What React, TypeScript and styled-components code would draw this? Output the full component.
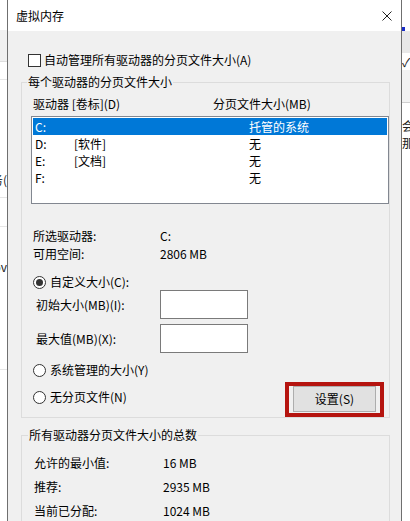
import React from "react";
import styled, { createGlobalStyle } from "styled-components";

const Global = createGlobalStyle`
  html, body { margin: 0; padding: 0; background: #fff; }
  body {
    width: 410px; height: 521px; overflow: hidden;
    font-family: "Noto Sans CJK SC", "Noto Sans", "Liberation Sans", sans-serif;
    font-size: 12px; color: #000;
  }
  * { box-sizing: border-box; }
`;

const Screen = styled.div`
  display: flex;
  width: 410px;
  height: 521px;
  overflow: hidden;
`;

const Strip = styled.div<{ $w: number }>`
  width: ${(p) => p.$w}px;
  flex: none;
  display: flex;
  flex-direction: column;
  overflow: hidden;
  background: #fff;
`;

const Seg = styled.div<{ $h: number; $bg?: string; $line?: string; $end?: boolean }>`
  height: ${(p) => p.$h}px;
  flex: none;
  background: ${(p) => p.$bg || "#fff"};
  border-bottom: ${(p) => (p.$line ? `1px solid ${p.$line}` : "none")};
  display: flex;
  align-items: center;
  justify-content: ${(p) => (p.$end ? "flex-end" : "flex-start")};
  overflow: hidden;
  white-space: nowrap;
  line-height: 16px;
  color: #222;
`;

const Mark = styled.div`
  width: 3px;
  height: 4px;
  background: #1a2ec8;
`;

const Dialog = styled.div`
  width: 395px;
  flex: none;
  display: flex;
  flex-direction: column;
  border-left: 1px solid #6f6f6f;
  border-right: 1px solid #6f6f6f;
  background: #f0f0f0;
`;

const TitleBar = styled.div`
  height: 31px;
  flex: none;
  background: #fff;
  display: flex;
  align-items: center;
  justify-content: space-between;
  padding: 0 8px 0 8px;
  line-height: 16px;
`;

const CloseBtn = styled.div`
  width: 10px;
  height: 10px;
  margin-right: 1px;
  display: flex;
`;

const Body = styled.div`
  flex: 1;
  padding: 21px 11px 0 13px;
  display: flex;
  flex-direction: column;
`;

const CheckRow = styled.label`
  display: flex;
  align-items: center;
  height: 16px;
  margin-left: 7px;
  gap: 3px;
  line-height: 16px;
`;

const CheckBox = styled.span`
  width: 13px;
  height: 13px;
  border: 1px solid #333;
  background: #fff;
  flex: none;
`;

const Group = styled.fieldset<{ $mt: number }>`
  margin: ${(p) => p.$mt}px 0 0 0;
  padding: 0;
  min-width: 0;
  border: 1px solid #dcdcdc;
`;

const Legend = styled.legend<{ $ml: number }>`
  margin-left: ${(p) => p.$ml}px;
  padding: 0 1px;
  line-height: 16px;
  height: 16px;
`;

const GroupInner = styled.div<{ $pl: number }>`
  padding-left: ${(p) => p.$pl}px;
  display: flex;
  flex-direction: column;
`;

const HeaderRow = styled.div`
  display: grid;
  grid-template-columns: 180px 1fr;
  margin: 6px 0 0 2px;
  line-height: 16px;
  height: 16px;
`;

const ListBox = styled.div`
  margin-top: 4px;
  height: 88px;
  border: 1px solid #828790;
  background: #fff;
  padding: 1px;
`;

const ListRow = styled.div<{ $sel?: boolean }>`
  display: grid;
  grid-template-columns: 39px 175px 1fr;
  height: 17px;
  line-height: 17px;
  padding-left: 2px;
  background: ${(p) => (p.$sel ? "#0078d7" : "transparent")};
  color: ${(p) => (p.$sel ? "#fff" : "#000")};
`;

const InfoRow = styled.div<{ $lw: number; $h: number; $ml: number; $mt?: number }>`
  display: grid;
  grid-template-columns: ${(p) => p.$lw}px 1fr;
  height: ${(p) => p.$h}px;
  line-height: ${(p) => p.$h}px;
  margin-left: ${(p) => p.$ml}px;
  margin-top: ${(p) => p.$mt || 0}px;
`;

const RadioRow = styled.label<{ $mt: number }>`
  display: flex;
  align-items: center;
  gap: 4px;
  height: 16px;
  line-height: 16px;
  margin: ${(p) => p.$mt}px 0 0 2px;
`;

const Radio = styled.span<{ $on?: boolean }>`
  width: 13px;
  height: 13px;
  border-radius: 50%;
  border: 1px solid #333;
  background: #fff;
  flex: none;
  display: flex;
  align-items: center;
  justify-content: center;
  &::after {
    content: "";
    width: 7px;
    height: 7px;
    border-radius: 50%;
    background: ${(p) => (p.$on ? "#333" : "transparent")};
  }
`;

const FieldRow = styled.div<{ $mt: number }>`
  display: grid;
  grid-template-columns: 124px 88px;
  align-items: center;
  margin: ${(p) => p.$mt}px 0 0 5px;
  line-height: 16px;
`;

const Input = styled.div`
  height: 29px;
  border: 1px solid #7a7a7a;
  background: #fff;
`;

const BottomRow = styled.div`
  display: flex;
  justify-content: space-between;
  align-items: flex-start;
  margin-top: 4px;
  height: 35px;
`;

const Highlight = styled.div`
  width: 99px;
  height: 35px;
  border: 4px solid #b5140f;
  padding: 0 4px 0 4px;
  margin-right: 5px;
`;

const Button = styled.div`
  height: 26px;
  border: 1px solid #adadad;
  background: #e1e1e1;
  display: flex;
  align-items: center;
  justify-content: center;
  line-height: 16px;
`;

const Totals = styled.div`
  padding: 8px 0 0 12px;
  display: flex;
  flex-direction: column;
`;

export default function App() {
  return (
    <>
      <Global />
      <Screen>
        <Strip $w={7}>
          <Seg $h={30} />
          <Seg $h={32} $bg="#f0f0f0" $line="#dedede" />
          <Seg $h={18} $line="#e6e6e6" />
          <Seg $h={92} />
          <Seg $h={16} $end>务(</Seg>
          <Seg $h={10} $line="#e6e6e6" />
          <Seg $h={29} $line="#e6e6e6" />
          <Seg $h={32} />
          <Seg $h={16} $end>ov</Seg>
          <Seg $h={95} $line="#e6e6e6" />
        </Strip>
        <Dialog>
          <TitleBar>
            <span>虚拟内存</span>
            <CloseBtn>
              <svg width="10" height="10" viewBox="0 0 10 10">
                <path d="M0.5 0.5 L9.5 9.5 M9.5 0.5 L0.5 9.5" stroke="#222" strokeWidth="1" />
              </svg>
            </CloseBtn>
          </TitleBar>
          <Body>
            <CheckRow>
              <CheckBox />
              <span>自动管理所有驱动器的分页文件大小(A)</span>
            </CheckRow>
            <Group $mt={6}>
              <Legend $ml={5}>每个驱动器的分页文件大小</Legend>
              <GroupInner $pl={9}>
                <HeaderRow>
                  <span>驱动器 [卷标](D)</span>
                  <span>分页文件大小(MB)</span>
                </HeaderRow>
                <ListBox>
                  <ListRow $sel>
                    <span>C:</span>
                    <span></span>
                    <span>托管的系统</span>
                  </ListRow>
                  <ListRow>
                    <span>D:</span>
                    <span>[软件]</span>
                    <span>无</span>
                  </ListRow>
                  <ListRow>
                    <span>E:</span>
                    <span>[文档]</span>
                    <span>无</span>
                  </ListRow>
                  <ListRow>
                    <span>F:</span>
                    <span></span>
                    <span>无</span>
                  </ListRow>
                </ListBox>
                <InfoRow $lw={127} $h={18} $ml={2} $mt={23}>
                  <span>所选驱动器:</span>
                  <span>C:</span>
                </InfoRow>
                <InfoRow $lw={127} $h={18} $ml={2}>
                  <span>可用空间:</span>
                  <span>2806 MB</span>
                </InfoRow>
                <RadioRow $mt={11}>
                  <Radio $on />
                  <span>自定义大小(C):</span>
                </RadioRow>
                <FieldRow $mt={0}>
                  <span>初始大小(MB)(I):</span>
                  <Input />
                </FieldRow>
                <FieldRow $mt={5}>
                  <span>最大值(MB)(X):</span>
                  <Input />
                </FieldRow>
                <RadioRow $mt={9}>
                  <Radio />
                  <span>系统管理的大小(Y)</span>
                </RadioRow>
                <BottomRow>
                  <RadioRow $mt={7}>
                    <Radio />
                    <span>无分页文件(N)</span>
                  </RadioRow>
                  <Highlight>
                    <Button>设置(S)</Button>
                  </Highlight>
                </BottomRow>
              </GroupInner>
            </Group>
            <Group $mt={9}>
              <Legend $ml={6}>所有驱动器分页文件大小的总数</Legend>
              <Totals>
                <InfoRow $lw={129} $h={24} $ml={0}>
                  <span>允许的最小值:</span>
                  <span>16 MB</span>
                </InfoRow>
                <InfoRow $lw={129} $h={24} $ml={0}>
                  <span>推荐:</span>
                  <span>2935 MB</span>
                </InfoRow>
                <InfoRow $lw={129} $h={24} $ml={0}>
                  <span>当前已分配:</span>
                  <span>1024 MB</span>
                </InfoRow>
              </Totals>
            </Group>
          </Body>
        </Dialog>
        <Strip $w={8}>
          <Seg $h={26} />
          <Seg $h={5}>
            <Mark />
          </Seg>
          <Seg $h={22} $bg="#e8e8e8" />
          <Seg $h={17}>✓</Seg>
          <Seg $h={33} $bg="#f2f2f2" $line="#cfcfcf" />
          <Seg $h={14} />
          <Seg $h={17}>会</Seg>
          <Seg $h={18}>那</Seg>
        </Strip>
      </Screen>
    </>
  );
}
